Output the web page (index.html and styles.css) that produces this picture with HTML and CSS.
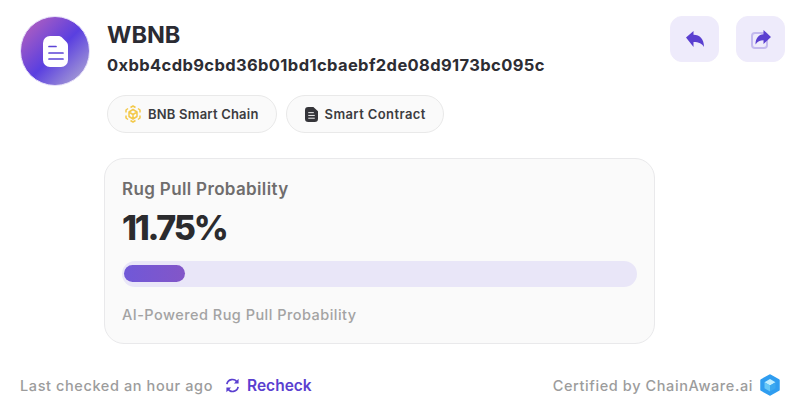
FILE: index.html
```html
<!DOCTYPE html>
<html lang="en">
<head>
<meta charset="utf-8">
<title>WBNB</title>
<link rel="stylesheet" href="styles.css">
</head>
<body>
<main class="page">
  <div class="top">
    <div class="avatar">
      <svg class="avatar-icon" viewBox="0 0 25 31"><path class="doc" d="M7 0h8c2 0 3 .6 4.500 2l3.500 3.500c1.400 1.500 2 2.500 2 4.500v14a7 7 0 0 1-7 7H7a7 7 0 0 1-7-7V7a7 7 0 0 1 7-7z"/><path class="doc-lines" d="M6 10.500h7M6 17h14M6 23h14"/></svg>
    </div>
    <div class="main">
      <div class="head">
        <div class="titles">
          <h1 class="name">WBNB</h1>
          <div class="address">0xbb4cdb9cbd36b01bd1cbaebf2de08d9173bc095c</div>
        </div>
        <div class="actions">
          <button class="action" aria-label="Back">
            <svg class="action-icon" viewBox="0 0 18 16"><path class="solid" d="M0 6.500 7.500 0v3.800C14 4 18 8 18 16c-2-3.500-5-5-10.500-5v5z"/></svg>
          </button>
          <button class="action" aria-label="Share">
            <svg class="action-icon large" viewBox="0 0 20 19"><rect class="frame" x="1" y="3" width="15" height="15" rx="3"/><path class="solid" d="M12.500 0 20 7l-7.500 7v-3.800c-3.500 0-6 1-8 4.300 0-6 3-10 8-10.200z"/></svg>
          </button>
        </div>
      </div>
      <div class="chips">
        <span class="chip">
          <svg class="chip-icon" viewBox="0 0 18 18"><path class="bnb-line" d="M9 4.500 13 7v4.500L9 14l-4-2.500V7zM5 7l4 2.500L13 7M9 9.500V14"/><path class="bnb-line" d="M6.500 2.500 9 1l2.500 1.500M14 3.500 16 5v2.500M16 10.500V13l-2 1.500M11.500 15.500 9 17l-2.500-1.500M4 14.500 2 13v-2.500M2 7.500V5l2-1.500"/></svg>
          BNB Smart Chain
        </span>
        <span class="chip chip-wide">
          <svg class="chip-icon dark" viewBox="0 0 14 16"><path class="doc-dark" d="M3.500 0H9l5 4.500v8A3.500 3.500 0 0 1 10.500 16h-7A3.500 3.500 0 0 1 0 12.500v-9A3.500 3.500 0 0 1 3.500 0z"/><path class="dark-lines" d="M3.500 6h6M3.500 9h7M3.500 12h7"/></svg>
          Smart Contract
        </span>
      </div>
      <section class="card">
        <h2 class="card-title">Rug Pull Probability</h2>
        <div class="value">11.75%</div>
        <div class="track"><div class="fill" style="width:11.9%"></div></div>
        <p class="note">AI-Powered Rug Pull Probability</p>
      </section>
    </div>
  </div>
  <footer class="foot">
    <div class="foot-left">
      <span>Last checked an hour ago</span>
      <a class="recheck">
        <svg class="recheck-icon" viewBox="0 0 16 16"><path class="arc" d="M2 6.500A6 6 0 0 1 13 4.500M14 9.500A6 6 0 0 1 3 11.500"/><path class="solid" d="M14.500 0.800v5h-5zM1.500 15.200v-5h5z"/></svg>
        Recheck
      </a>
    </div>
    <div class="foot-right">
      <span>Certified by ChainAware.ai</span>
      <svg class="logo" viewBox="0 0 20 22"><path class="hex-out" d="M10 1.500 18.500 6.300v9.400L10 20.500 1.500 15.700V6.300z"/><path class="hex-top" d="M10 5l5.500 3.200L10 11.400 4.500 8.200z"/><path class="hex-left" d="M4.500 8.200 10 11.400v6L4.500 14.300z"/><path class="hex-right" d="M15.500 8.200 10 11.400v6l5.500-3.100z"/></svg>
    </div>
  </footer>
</main>
</body>
</html>
```
FILE: styles.css
```css
* { box-sizing: border-box; }
html, body { margin: 0; padding: 0; background: #fff; }
body { font-family: "Inter", "Liberation Sans", sans-serif; color: #2d2d2f; width: 795px; height: 406px; overflow: hidden; }
.page { display: flex; flex-direction: column; padding: 16px 10px 0 20px; }
.top { display: flex; gap: 17px; }
.avatar {
  width: 70px; height: 70px; border-radius: 50%; flex: none;
  display: flex; align-items: center; justify-content: center;
  border: 1px solid #e5defa;
  background: linear-gradient(135deg, #b05fc0 8%, #5a3fe0 52%, #a9a0d4 92%);
}
.avatar-icon { width: 25px; height: 31px; }
.doc { fill: #fff; }
.doc-lines { stroke: #5c44d6; stroke-width: 1.700; stroke-linecap: round; fill: none; }
.main { flex: 1; min-width: 0; display: flex; flex-direction: column; }
.head { display: flex; justify-content: space-between; }
.titles { padding-top: 4px; }
.name { margin: 0; font-size: 23.500px; line-height: 30px; font-weight: 700; color: #2b2b33; }
.address { margin-top: 3px; font-size: 16.500px; line-height: 24px; font-weight: 700; color: #2d2d33; letter-spacing: 0.380px; }
.actions { display: flex; gap: 17px; }
.action { width: 49px; height: 46px; border: 1px solid #efebfb; border-radius: 12px; background: #eeebfb; padding: 0; display: flex; align-items: center; justify-content: center; }
.action-icon { width: 18px; height: 16px; }
.action-icon.large { width: 20px; height: 19px; }
.solid { fill: #5a3fd0; }
.frame { fill: none; stroke: #c3b9ee; stroke-width: 2; }
.chips { display: flex; gap: 9px; margin-top: 18px; }
.chip { height: 38px; padding: 0 17px 0 16px; display: inline-flex; align-items: center; gap: 6px; border: 1px solid #e9e9e9; border-radius: 19px; background: #fafafa; font-size: 13px; font-weight: 600; color: #3c3c40; letter-spacing: 0.200px; }
.chip-wide { letter-spacing: 0.400px; padding-left: 17px; }
.chip-icon { width: 18px; height: 18px; }
.chip-icon.dark { width: 13px; height: 15px; margin-right: 1px; margin-left: 1px; }
.bnb-line { fill: none; stroke: #f3c94a; stroke-width: 1.500; stroke-linejoin: round; }
.doc-dark { fill: #35353a; }
.dark-lines { stroke: #fff; stroke-width: 1; fill: none; }
.card { width: 551px; height: 186px; margin: 25px 0 0 -3px; padding: 18px 17px 0; border: 1px solid #e9e9eb; border-radius: 20px; background: #fafafa; }
.card-title { margin: 0; font-size: 17px; line-height: 24px; font-weight: 600; color: #6f6d6d; letter-spacing: 0.350px; }
.value { margin-top: 4px; font-size: 34px; line-height: 46px; font-weight: 800; color: #2b2b2e; letter-spacing: -2.200px; }
.track { margin-top: 10px; height: 26px; width: 515px; border-radius: 13px; background: #e9e6f8; padding: 4px 2px; }
.fill { height: 17px; border-radius: 9px; background: linear-gradient(90deg, #7058d8, #8356c8); }
.note { margin: 18px 0 0; font-size: 14.500px; line-height: 20px; font-weight: 500; color: #a3a3a3; letter-spacing: 0.470px; }
.foot { display: flex; justify-content: space-between; align-items: center; margin-top: 28px; margin-right: 5px; height: 26px; font-size: 14.500px; font-weight: 500; color: #9c9c9c; letter-spacing: 0.600px; }
.foot-left, .foot-right { display: flex; align-items: center; }
.foot-left { gap: 12px; }
.foot-right { gap: 7px; }
.recheck { display: inline-flex; align-items: center; gap: 7px; color: #5a3fd0; font-size: 15.500px; font-weight: 600; letter-spacing: 0; }
.recheck-icon { width: 15px; height: 15px; }
.arc { fill: none; stroke: #5a3fd0; stroke-width: 1.800; }
.logo { width: 20px; height: 22px; }
.hex-out { fill: #2f9df0; stroke: #2f9df0; stroke-width: 2.500; stroke-linejoin: round; }
.hex-top { fill: #bfeeff; }
.hex-left { fill: #67c8f7; }
.hex-right { fill: #3aa8f0; }
```
